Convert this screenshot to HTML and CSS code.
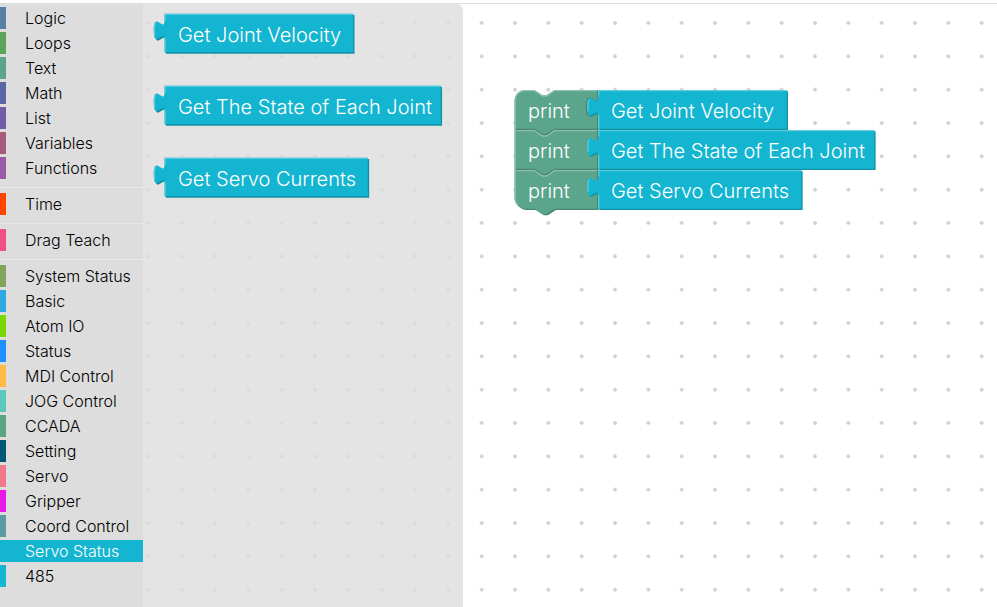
FILE: index.html
```html
<!DOCTYPE html>
<html lang="en">
<head>
<meta charset="utf-8">
<title>Block editor</title>
<link rel="stylesheet" href="styles.css">
</head>
<body>
<main class="editor">
  <nav class="toolbox" aria-label="Block categories">
    <button type="button" class="category logic">Logic</button>
    <button type="button" class="category loops">Loops</button>
    <button type="button" class="category text">Text</button>
    <button type="button" class="category math">Math</button>
    <button type="button" class="category list">List</button>
    <button type="button" class="category variables">Variables</button>
    <button type="button" class="category functions">Functions</button>
    <hr class="separator">
    <button type="button" class="category time">Time</button>
    <hr class="separator">
    <button type="button" class="category drag">Drag Teach</button>
    <hr class="separator">
    <button type="button" class="category system">System Status</button>
    <button type="button" class="category basic">Basic</button>
    <button type="button" class="category atom">Atom IO</button>
    <button type="button" class="category status">Status</button>
    <button type="button" class="category mdi">MDI Control</button>
    <button type="button" class="category jog">JOG Control</button>
    <button type="button" class="category ccada">CCADA</button>
    <button type="button" class="category setting">Setting</button>
    <button type="button" class="category servo">Servo</button>
    <button type="button" class="category gripper">Gripper</button>
    <button type="button" class="category coord">Coord Control</button>
    <button type="button" class="category servo-status selected" aria-current="true">Servo Status</button>
    <button type="button" class="category rs485">485</button>
  </nav>
  <section class="workspace" aria-label="Workspace">
    <svg class="canvas" width="100%" height="100%">
      <defs>
        <pattern id="grid" x="-11.3333" y="2.3333" width="33.3333" height="33.3333" patternUnits="userSpaceOnUse">
          <path class="dot" d="M14.67 16.67h4M16.67 14.67v4"/>
        </pattern>
        <g id="velocity">
          <path class="shade" transform="translate(1 1)" d="M0 0H141.5V29H0V20C0 10-8 28-8 12.5S0 15 0 5z"/>
          <path class="fill" d="M0 0H141.5V29H0V20C0 10-8 28-8 12.5S0 15 0 5z"/>
          <path class="shine" d="M.5 28.5V18.5M-7.3 16Q-8.3 8.7-6.4 7.4M.5 5V.5H141"/>
        </g>
        <g id="state">
          <path class="shade" transform="translate(1 1)" d="M0 0H207.2V29H0V20C0 10-8 28-8 12.5S0 15 0 5z"/>
          <path class="fill" d="M0 0H207.2V29H0V20C0 10-8 28-8 12.5S0 15 0 5z"/>
          <path class="shine" d="M.5 28.5V18.5M-7.3 16Q-8.3 8.7-6.4 7.4M.5 5V.5H206.7"/>
        </g>
        <g id="currents">
          <path class="shade" transform="translate(1 1)" d="M0 0H152.5V29H0V20C0 10-8 28-8 12.5S0 15 0 5z"/>
          <path class="fill" d="M0 0H152.5V29H0V20C0 10-8 28-8 12.5S0 15 0 5z"/>
          <path class="shine" d="M.5 28.5V18.5M-7.3 16Q-8.3 8.7-6.4 7.4M.5 5V.5H152"/>
        </g>
      </defs>
      <rect width="100%" height="100%" fill="url(#grid)"/>

      <g transform="translate(371.5 86) scale(1.3333)">
        <path class="print-shade" transform="translate(1 1)" d="M0 8A8 8 0 0 1 8 0H15l6 4h3l6-4H62V89H30l-6 4h-3l-6-4H8a8 8 0 0 1-8-8z"/>
        <path class="print-fill" d="M0 8A8 8 0 0 1 8 0H15l6 4h3l6-4H62V89H30l-6 4h-3l-6-4H8a8 8 0 0 1-8-8z"/>
        <path class="print-shine" d="M2.7 86.3A7.5 7.5 0 0 1 .5 81V8A7.5 7.5 0 0 1 8 .5H15l6 4h3l6-4H62"/>
        <path class="print-shade-line" d="M1 29.5H15l6 4h3l6-4H62M1 59.5H15l6 4h3l6-4H62"/>
        <path class="print-shine" d="M.5 30.5H15l6 4h3l6-4H62M.5 60.5H15l6 4h3l6-4H62"/>
        <path class="socket" d="M62.5 0V5C62.5 15 54 -3 54 12.5S62.5 10 62.5 20V89"/>
      </g>
      <use href="#velocity" transform="translate(455 86) scale(1.3333)"/>
      <use href="#state" transform="translate(455 126) scale(1.3333)"/>
      <use href="#currents" transform="translate(455 166) scale(1.3333)"/>
      <g class="label">
        <text x="385" y="114">print</text>
        <text x="385" y="154">print</text>
        <text x="385" y="194">print</text>
        <text x="468" y="114">Get Joint Velocity</text>
        <text x="468" y="154">Get The State of Each Joint</text>
        <text x="468" y="194">Get Servo Currents</text>
      </g>
    </svg>
    <aside class="flyout" aria-label="Servo Status blocks">
      <svg class="canvas" width="100%" height="100%">
        <use href="#velocity" transform="translate(21.5 10.6667) scale(1.3333)"/>
        <use href="#state" transform="translate(21.5 82.6667) scale(1.3333)"/>
        <use href="#currents" transform="translate(21.5 154.6667) scale(1.3333)"/>
        <g class="label">
          <text x="35" y="39">Get Joint Velocity</text>
          <text x="35" y="111">Get The State of Each Joint</text>
          <text x="35" y="183">Get Servo Currents</text>
        </g>
      </svg>
    </aside>
  </section>
</main>
</body>
</html>
```
FILE: styles.css
```css
* { box-sizing: border-box; }
body {
  margin: 0;
  background: #fff;
  font-family: Inter, "Liberation Sans", sans-serif;
}
.editor {
  display: flex;
  height: 100vh;
  padding-top: 3px;
}
.toolbox {
  display: flex;
  flex-direction: column;
  flex: 0 0 auto;
  width: 143px;
  padding-top: 4px;
  background: #ddd;
}
.category {
  flex: none;
  height: 22px;
  margin: 0 0 3px;
  padding: 0 0 0 19px;
  border: 0 solid;
  border-left-width: 6px;
  background: none;
  color: #000;
  font: 300 16px/22px Inter, "Liberation Sans", sans-serif;
  text-align: left;
  white-space: nowrap;
}
.separator {
  flex: none;
  width: 100%;
  height: 1px;
  margin: 5px 0;
  border: 0;
  background: #e8e8e8;
}
.logic { border-color: #5b80a5; }
.loops { border-color: #5ba55b; }
.text { border-color: #5ba58c; }
.math { border-color: #5b67a5; }
.list { border-color: #745ba5; }
.variables { border-color: #a55b80; }
.functions { border-color: #995ba5; }
.time { border-color: #ff4500; }
.drag { border-color: #f05088; }
.system { border-color: #80a55b; }
.basic { border-color: #30a8e0; }
.atom { border-color: #78d800; }
.status { border-color: #1e90ff; }
.mdi { border-color: #ffbc44; }
.jog { border-color: #5bc8bb; }
.ccada { border-color: #5ba580; }
.setting { border-color: #005875; }
.servo { border-color: #f07888; }
.gripper { border-color: #e818e8; }
.coord { border-color: #5b99a5; }
.servo-status, .rs485 { border-color: #14b5d0; }
.selected { background: #14b5d0; color: #fff; font-weight: 350; }
.workspace {
  position: relative;
  flex: 1;
  min-width: 0;
  border-top: 1px solid #ddd;
}
.canvas {
  display: block;
  overflow: hidden;
}
.flyout {
  position: absolute;
  top: -1px;
  bottom: 0;
  left: 0;
  width: 320px;
  border-top-right-radius: 8px;
  background: rgb(221 221 221 / 80%);
}
.dot { fill: none; stroke: #d2d2d2; stroke-width: 2; }
.fill { fill: #14b5d0; }
.shade { fill: #1091a6; }
.shine { fill: none; stroke: #5bcbde; stroke-width: 1; }
.print-fill { fill: #5ba58c; }
.print-shade { fill: #498470; }
.print-shade-line { fill: none; stroke: #498470; stroke-width: 1; }
.print-shine { fill: none; stroke: #8cc0af; stroke-width: 1; }
.socket { fill: none; stroke: #498470; stroke-width: 1; }
.label {
  fill: #fff;
  font-family: Inter, "Liberation Sans", sans-serif;
  font-size: 20px;
  font-weight: 350;
}
```
